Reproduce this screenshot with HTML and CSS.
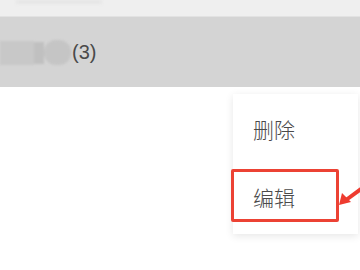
FILE: index.html
```html
<!DOCTYPE html>
<html>
<head>
<meta charset="utf-8">
<link rel="stylesheet" href="styles.css">
</head>
<body>
<div class="page">
  <div class="topbar"><span class="ghost"></span></div>
  <div class="band">
    <div class="blur-name">
      <span class="b b1"></span><span class="b b2"></span><span class="b b3"></span>
    </div>
    <span class="count">(3)</span>
  </div>
  <div class="content">
    <div class="menu">
      <div class="item">删除</div>
      <div class="item">编辑</div>
    </div>
    <div class="highlight"></div>
    <svg class="arrow" width="30" height="30" viewBox="0 0 30 30">
      <line x1="30" y1="3" x2="8" y2="19" stroke="#ee3b2f" stroke-width="4" stroke-linecap="round"/>
      <polygon points="1,24 4,12 13,21" fill="#ee3b2f"/>
    </svg>
  </div>
</div>
</body>
</html>
```
FILE: styles.css
```css
html, body {
  margin: 0;
  padding: 0;
  background: #ffffff;
}
.page {
  width: 360px;
  height: 270px;
  overflow: hidden;
  font-family: "Noto Sans CJK SC", "Noto Sans", sans-serif;
}
.topbar {
  height: 16px;
  background: #efefef;
  border-bottom: 1px solid #e2e2e2;
}
.ghost {
  display: block;
  margin-left: 16px;
  width: 86px;
  height: 4px;
  background: #e6e6e6;
  filter: blur(1.5px);
}
.band {
  height: 70px;
  background: #d4d4d4;
  display: flex;
  align-items: center;
}
.blur-name {
  display: flex;
  align-items: center;
  height: 26px;
  margin-top: 1px;
  filter: blur(1px);
}
.b {
  display: block;
  background: #c3c3c3;
}
.b1 {
  width: 34px;
  height: 24px;
  background: #c8c8c8;
}
.b2 {
  width: 10px;
  height: 22px;
  background: #c0c0c0;
}
.b3 {
  width: 27px;
  height: 25px;
  border-radius: 12px;
  background: #c5c5c5;
}
.count {
  font-family: "Liberation Sans", "Noto Sans", sans-serif;
  font-size: 20px;
  color: #4a4a4a;
  margin-left: 1px;
}
.content {
  position: relative;
  height: 183px;
}
.menu {
  position: absolute;
  left: 233px;
  top: 7px;
  width: 125px;
  padding: 1px 0 3px;
  background: #ffffff;
  box-shadow: 0 2px 8px rgba(0,0,0,0.10);
}
.item {
  height: 68px;
  display: flex;
  align-items: center;
  padding-left: 20px;
  font-size: 21px;
  font-weight: 300;
  color: #4a4a4a;
}
.highlight {
  position: absolute;
  left: 231px;
  top: 82px;
  width: 102px;
  height: 47px;
  border: 3px solid #ec4234;
  border-radius: 2px;
}
.arrow {
  position: absolute;
  left: 338px;
  top: 94px;
}
```
